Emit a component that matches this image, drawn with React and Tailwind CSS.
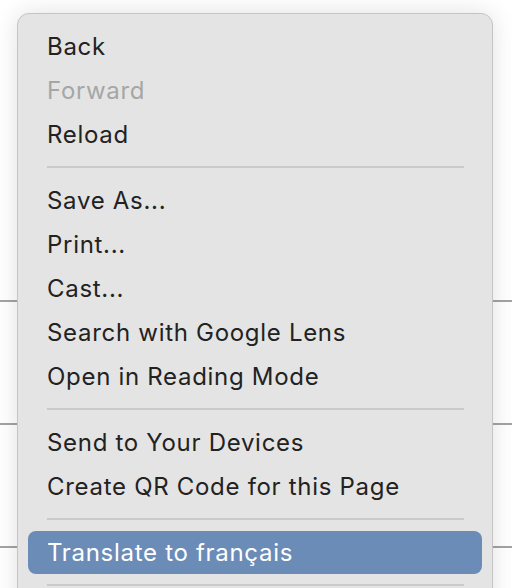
import React from 'react';

const groups = [
  [
    { label: 'Back' },
    { label: 'Forward', disabled: true },
    { label: 'Reload' },
  ],
  [
    { label: 'Save As...' },
    { label: 'Print...' },
    { label: 'Cast...' },
    { label: 'Search with Google Lens' },
    { label: 'Open in Reading Mode' },
  ],
  [
    { label: 'Send to Your Devices' },
    { label: 'Create QR Code for this Page' },
  ],
  [{ label: 'Translate to français', active: true }],
];

const Separator = () => (
  <div className="h-[22px] flex items-center pl-[29px] pr-[28px]">
    <div className="w-full h-[2px] bg-[#cacaca]" />
  </div>
);

const MenuItem = ({ label, disabled, active }) => (
  <div className="h-[44px] px-[10px] flex items-center">
    <div
      className={`w-full h-[43px] rounded-[8px] pl-[19px] pt-[2px] flex items-center ${
        active ? 'bg-[#6b8cb6] text-white' : disabled ? 'text-[#a6a6a6]' : 'text-[#222222]'
      }`}
    >
      {label}
    </div>
  </div>
);

export default function App() {
  return (
    <div
      className="relative w-[512px] h-[588px] overflow-hidden bg-white"
      style={{ fontFamily: 'Inter, "Noto Sans", sans-serif' }}
    >
      {/* page behind the menu */}
      <div className="flex flex-col">
        <div className="h-[300px]" />
        <div className="h-[2px] bg-[#a3a3a3]" />
        <div className="h-[121px]" />
        <div className="h-[2px] bg-[#a3a3a3]" />
        <div className="h-[121px]" />
        <div className="h-[2px] bg-[#a3a3a3]" />
      </div>

      {/* context menu */}
      <div className="absolute left-[17px] top-[13px] w-[476px] h-[700px] rounded-[12px] border border-[#c4c4c4] bg-[#e4e4e4] pt-[10px] text-[24px] tracking-[0.7px] shadow-[0_0_24px_rgba(0,0,0,0.12)]">
        {groups.map((g, gi) => (
          <div key={gi}>
            {gi > 0 && <Separator />}
            {g.map((it) => (
              <MenuItem key={it.label} {...it} />
            ))}
          </div>
        ))}
        <Separator />
      </div>
    </div>
  );
}
